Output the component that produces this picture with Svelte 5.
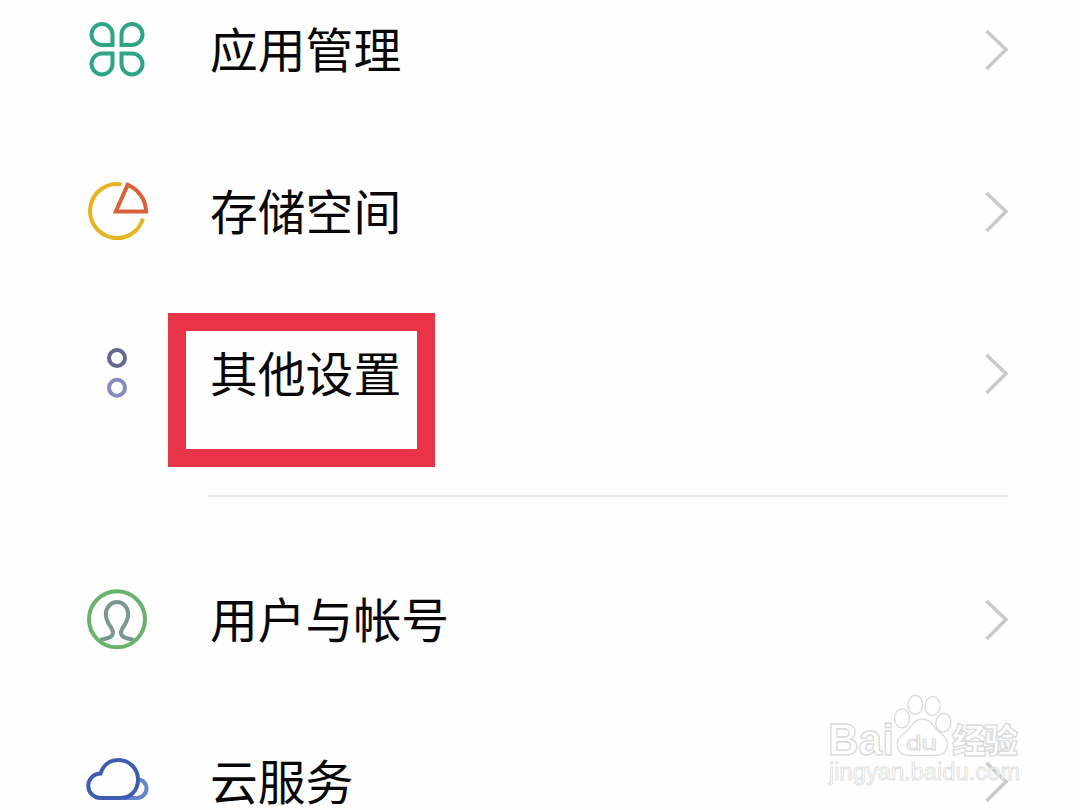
<script lang="ts">
  const groups = [
    [
      { icon: 'apps', label: '应用管理' },
      { icon: 'storage', label: '存储空间' },
      { icon: 'other', label: '其他设置', marked: true },
    ],
    [
      { icon: 'user', label: '用户与帐号' },
      { icon: 'cloud', label: '云服务' },
    ],
  ]
</script>

<div class="screen">
  <div class="list">
    {#each groups as group}
      <ul class="group">
        {#each group as item}
          <li class="row">
            <svg class="icon" viewBox="0 0 64 64">
              {#if item.icon === 'apps'}
                <g stroke="#2fa587">
                  <path d="M27.5 27V16.5A10.5 10.5 0 1 0 17 27Z" />
                  <path d="M36.5 27V16.5A10.5 10.5 0 1 1 47 27Z" />
                  <path d="M27.5 35.5V46A10.5 10.5 0 1 1 17 35.5Z" />
                  <path d="M36.5 35.5V46A10.5 10.5 0 1 0 47 35.5Z" />
                </g>
              {:else if item.icon === 'storage'}
                <path stroke="#e6b422" d="M36.5 4.4A27 27 0 1 0 58 38.5" />
                <path stroke="#d9623a" d="M42.7 4.8L30.8 31.5H61C61 19.5 53 9 42.7 4.8Z" />
              {:else if item.icon === 'other'}
                <circle stroke="#62688f" cx="32" cy="16" r="8" />
                <circle stroke="#858cbd" cx="32" cy="45.8" r="8" />
              {:else if item.icon === 'user'}
                <path stroke="#7b9791" d="M15 52C22 50.5 28 49.5 28 44.5C28 39 20.8 36 20.8 26A11.2 12 0 0 1 43.2 26C43.2 36 36 39 36 44.5C36 49.5 42 50.5 49 52" />
                <circle stroke="#69b36c" cx="32" cy="31.3" r="28" />
              {:else}
                <path stroke="#6285cc" d="M52.5 29.5C58 29.5 61.5 33.5 61.5 38.5C61.5 44 57 48 52 48H38" />
                <path stroke="#3f5db0" d="M15.5 48A12.2 12.2 0 0 1 15.5 23.5C18.5 14.5 25.5 10 33 10A19.5 19.5 0 0 1 53 29.5C53 40 46 48 36 48Z" />
              {/if}
            </svg>
            <span class="label" class:marked={item.marked}>{item.label}</span>
            <svg class="arrow" viewBox="0 0 26 42">
              <path d="M3.5 2L23 20.5L3.5 40" />
            </svg>
          </li>
        {/each}
      </ul>
    {/each}
  </div>

  <svg class="watermark" viewBox="0 0 210 100">
    <g class="latin">
      <text x="8" y="65" font-size="43.5" textLength="66" lengthAdjust="spacingAndGlyphs">Bai</text>
      <ellipse cx="82" cy="28.3" rx="7.5" ry="9.5" />
      <ellipse cx="95.3" cy="14.8" rx="7.3" ry="9.5" />
      <ellipse cx="112.5" cy="16" rx="7.5" ry="9.5" transform="rotate(8 112.5 16)" />
      <ellipse cx="123.3" cy="32.7" rx="7.5" ry="9.5" transform="rotate(10 123.3 32.7)" />
      <path d="M102 29C93 29 91 39 84 43.5C73 51 76 65 89 65.5C96 65.5 108 65 115 65.5C128 66 132 52 121 43.5C113 38 112 29 102 29Z" />
      <text class="du" x="86" y="59.5" font-size="20.5" textLength="31" lengthAdjust="spacingAndGlyphs">du</text>
    </g>
    <text class="cn" x="132" y="62.5" font-size="34" textLength="66">经验</text>
    <text class="url" x="9" y="90" font-size="23" textLength="191" lengthAdjust="spacingAndGlyphs">jingyan.baidu.com</text>
  </svg>
</div>

<style>
  :global(body) {
    background: #fefefe;
  }

  .screen {
    position: relative;
    width: 1080px;
    height: 810px;
    overflow: hidden;
    background: #fefefe;
    font-family: "Liberation Sans", "Noto Sans CJK SC", sans-serif;
  }

  .list {
    margin-top: -31px;
    padding: 0 71px 0 85px;
  }

  .group {
    list-style: none;
    margin: 0;
    padding: 0;
  }

  .group + .group::before {
    content: '';
    display: block;
    height: 2px;
    margin: 40px 1px 42px 123px;
    background: #e9e9e4;
  }

  .row {
    display: flex;
    align-items: center;
    height: 162px;
  }

  .icon {
    width: 64px;
    height: 64px;
    margin-right: 61px;
    fill: none;
    stroke-width: 4;
  }

  .label {
    position: relative;
    flex: 1;
    margin-bottom: 4px;
    font-family: "Noto Sans CJK SC", sans-serif;
    font-size: 47.8px;
    line-height: 48px;
    color: #080808;
  }

  /* red frame around the highlighted entry */
  .marked::after {
    content: '';
    position: absolute;
    left: -42px;
    top: -35px;
    width: 267px;
    height: 154px;
    box-sizing: border-box;
    border: 18px solid #e93447;
  }

  .arrow {
    width: 26px;
    height: 42px;
    fill: none;
    stroke: #c9c9c9;
    stroke-width: 3.5;
  }

  .watermark {
    position: absolute;
    left: 820px;
    top: 690px;
    width: 210px;
    height: 100px;
    fill: #fff;
    fill-opacity: 0.75;
    stroke: #dadada;
    stroke-width: 1.3;
  }

  .latin {
    font-weight: bold;
  }

  .du {
    font-weight: normal;
    stroke-width: 0.9;
  }

  .cn {
    font-family: "Noto Sans CJK SC", sans-serif;
    font-weight: 900;
  }

  .url {
    stroke: #e0e0e0;
    stroke-width: 0.9;
  }
</style>
